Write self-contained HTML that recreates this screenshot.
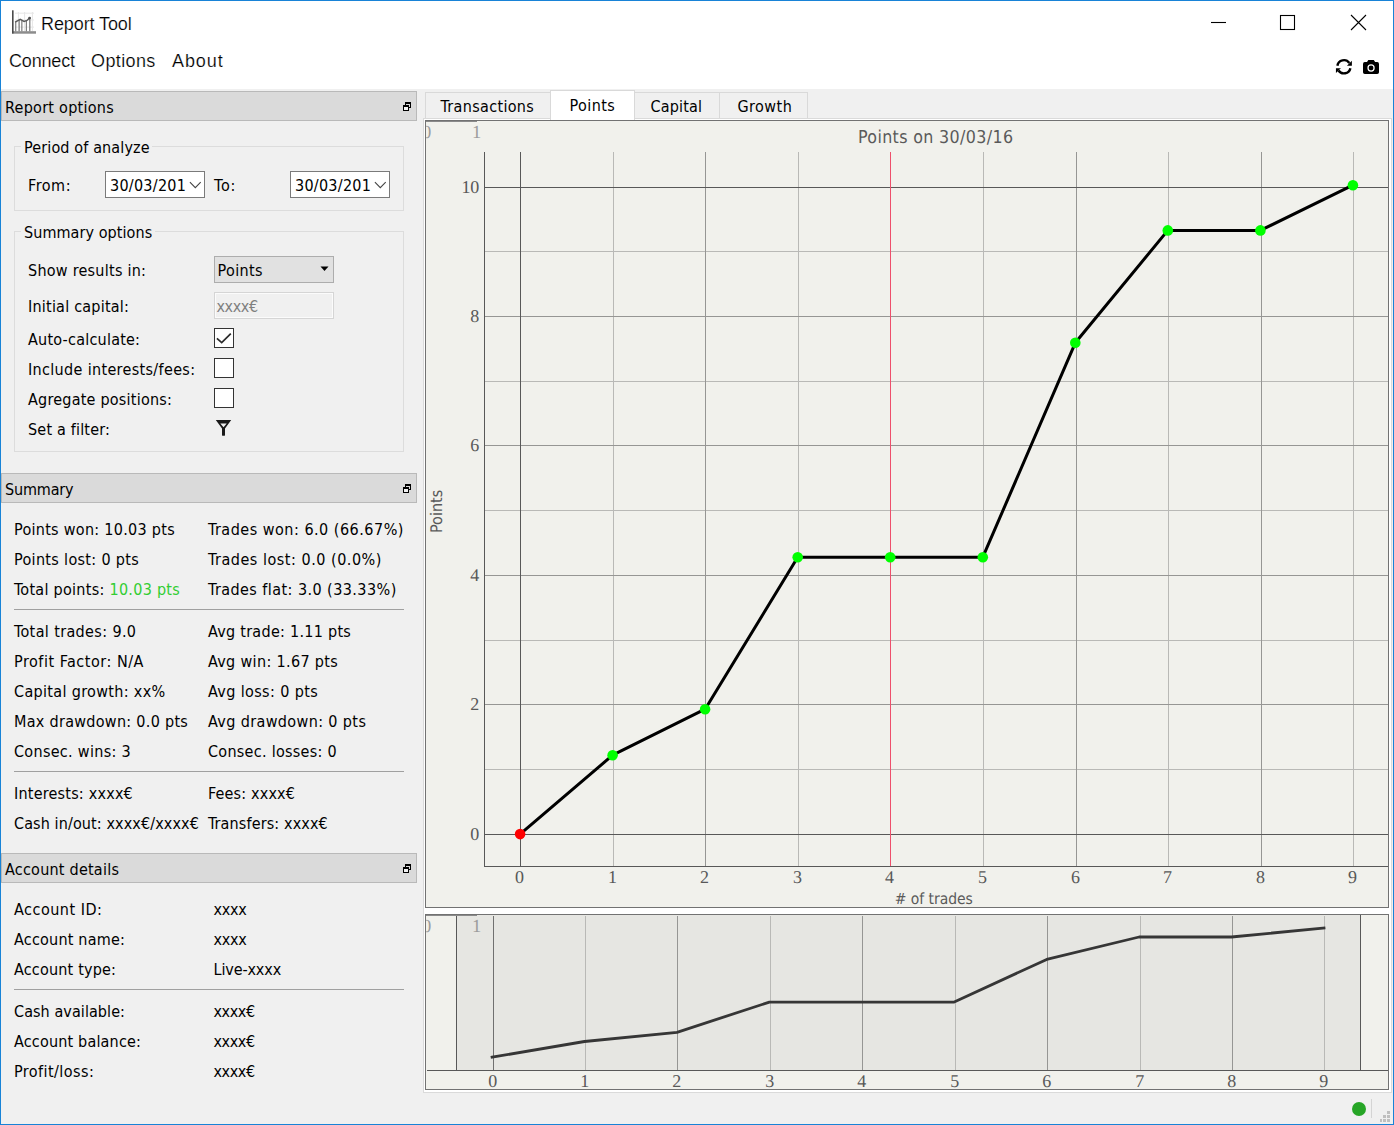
<!DOCTYPE html>
<html>
<head>
<meta charset="utf-8">
<title>Report Tool</title>
<style>
*{box-sizing:border-box;margin:0;padding:0}
html,body{width:1394px;height:1125px;overflow:hidden;background:#f0f0f0}
body{position:relative;font-family:"DejaVu Sans Condensed","Liberation Sans",sans-serif;font-size:16px;color:#000}
.abs{position:absolute}
.t{position:absolute;white-space:nowrap;line-height:20px;height:20px}
.seg{font-family:"Liberation Sans",sans-serif;font-size:18px;-webkit-text-stroke:0.2px #fff}
#win{position:absolute;left:0;top:0;width:1394px;height:1125px;border:1px solid #1883d7;z-index:50}
#top{position:absolute;left:0;top:0;width:1394px;height:89px;background:#fff}
.dock{position:absolute;left:1px;width:416px;height:30px;background:#dadada;border:1px solid #b9b9b9}
.gb{position:absolute;left:14px;width:390px;border:1px solid #dcdcdc}
.hr{position:absolute;left:14px;width:390px;height:1px;background:#a0a0a0}
.cb{position:absolute;left:214px;width:20px;height:20px;background:#fff;border:1px solid #333}
.tab{position:absolute;top:94px;height:26px;background:#f0f0f0;border:1px solid #d9d9d9;border-bottom:none}
</style>
</head>
<body>
<div id="top">
<svg class="abs" style="left:11px;top:10px" width="26" height="25" viewBox="0 0 26 25">
<g stroke="#e6e6e6" stroke-width="1" fill="none"><path d="M7.400 2V21M13.600 2V21M21.400 2V21M4 3.200H23M4 10H23M4 17.100H23"/></g>
<g fill="#707070"><rect x="4.200" y="12" width="1.100" height="9.500"/><rect x="7.600" y="9.800" width="1.100" height="11.700"/><rect x="10.300" y="10.500" width="1.100" height="11"/><rect x="14.800" y="11" width="1.100" height="10.500"/><rect x="18.200" y="8" width="1.200" height="13.500"/></g>
<path d="M4.100 12.200L9.200 9.300L13.100 11.400L16 10.500L18.600 7.900" stroke="#5a5a5a" stroke-width="1.400" fill="none"/>
<circle cx="18.600" cy="8.100" r="1.400" fill="#4c4c4c"/>
<rect x="1" y="21.200" width="24" height="2.500" fill="#8c8c8c"/>
<rect x="1" y="0.300" width="1.600" height="23.200" fill="#4a4a4a"/>
</svg>
<div class="t seg" style="left:41px;top:14px;letter-spacing:-0.099px;">Report Tool</div>
<div class="t seg" style="left:9px;top:51px;letter-spacing:-0.176px;">Connect</div>
<div class="t seg" style="left:91px;top:51px;letter-spacing:0.377px;">Options</div>
<div class="t seg" style="left:172px;top:51px;letter-spacing:0.901px;">About</div>
<svg class="abs" style="left:1200px;top:8px" width="180" height="30" viewBox="0 0 180 30">
<g stroke="#000" stroke-width="1.100" fill="none"><path d="M11 14.500h15"/><rect x="80.500" y="7.500" width="14" height="14"/><path d="M151 7l15 15M166 7l-15 15"/></g>
</svg>
<svg class="abs" style="left:1335px;top:58px" width="18" height="18" viewBox="0 0 18 18">
<g fill="none" stroke="#000" stroke-width="2.400"><path d="M2.400 7.780A6.600 6.600 0 0 1 14.340 4.960"/><path d="M15.390 10.140A6.600 6.600 0 0 1 3.520 12.540"/></g>
<path d="M16.890 2.820V7.780H11.940z" fill="#000"/><path d="M0.960 15.090V10.140H5.910z" fill="#000"/>
</svg>
<svg class="abs" style="left:1362px;top:58px" width="18" height="18" viewBox="0 0 18 18">
<path d="M1 5.900a1.800 1.800 0 0 1 1.800-1.800H5L6.300 2H11.800L13.100 4.100H15.200a1.800 1.800 0 0 1 1.800 1.800V14.200a1.800 1.800 0 0 1-1.800 1.800H2.800a1.800 1.800 0 0 1-1.800-1.800Z" fill="#000"/>
<circle cx="9.050" cy="10" r="3.050" fill="none" stroke="#fff" stroke-width="1.250"/>
</svg>
</div>
<div id="left">
<div class="dock" style="top:91px"></div>
<div class="t" style="left:5px;top:98px;letter-spacing:0.272px;">Report options</div>
<svg class="abs" style="left:403px;top:102px" width="8" height="9" viewBox="0 0 8 9"><g fill="#000"><rect x="2" y="0" width="6" height="2"/><rect x="2" y="0" width="1" height="3"/><rect x="7" y="0" width="1" height="6"/><rect x="6" y="5" width="2" height="1"/><rect x="0" y="3" width="6" height="6"/></g><rect x="1" y="5" width="4" height="3" fill="#f2f2f2"/></svg>
<div class="gb" style="top:146px;height:65px"></div>
<div class="abs" style="left:21px;top:140px;width:131px;height:12px;background:#f0f0f0"></div>
<div class="t" style="left:24px;top:138px;letter-spacing:0.131px;">Period of analyze</div>
<div class="t" style="left:28px;top:176px;letter-spacing:0.542px;">From:</div>
<div class="t" style="left:214px;top:176px;letter-spacing:0.866px;">To:</div>
<div class="abs" style="left:105px;top:171px;width:100px;height:27px;background:#fff;border:1px solid #7a7a7a"></div>
<svg class="abs" style="left:189px;top:181px" width="13" height="8" viewBox="0 0 13 8"><path d="M0.900 1.200l5.400 5.400 5.400-5.400" fill="none" stroke="#444" stroke-width="1.100"/></svg>
<div class="t" style="left:110px;top:176px;letter-spacing:0.259px;">30/03/201</div>
<div class="abs" style="left:290px;top:171px;width:100px;height:27px;background:#fff;border:1px solid #7a7a7a"></div>
<svg class="abs" style="left:374px;top:181px" width="13" height="8" viewBox="0 0 13 8"><path d="M0.900 1.200l5.400 5.400 5.400-5.400" fill="none" stroke="#444" stroke-width="1.100"/></svg>
<div class="t" style="left:295px;top:176px;letter-spacing:0.259px;">30/03/201</div>
<div class="gb" style="top:231px;height:221px"></div>
<div class="abs" style="left:21px;top:225px;width:134px;height:12px;background:#f0f0f0"></div>
<div class="t" style="left:24px;top:223px;letter-spacing:0.072px;">Summary options</div>
<div class="t" style="left:28px;top:261px;letter-spacing:0.254px;">Show results in:</div>
<div class="abs" style="left:214px;top:256px;width:120px;height:27px;background:#e1e1e1;border:1px solid #adadad"></div>
<div class="t" style="left:217.5px;top:261px;letter-spacing:0.366px;">Points</div>
<svg class="abs" style="left:320px;top:266px" width="9" height="6" viewBox="0 0 9 6"><path d="M0.500 0.500h8l-4 4.500z" fill="#000"/></svg>
<div class="t" style="left:28px;top:297px;letter-spacing:0.220px;">Initial capital:</div>
<div class="abs" style="left:214px;top:292px;width:120px;height:27px;background:#f0f0f0;border:1px solid #d5d5d5;box-shadow:inset 0 0 0 1px #fbfbfb"></div>
<div class="t" style="left:216.5px;top:297px;letter-spacing:-0.404px;color:#7f7f7f;">xxxx€</div>
<div class="t" style="left:28px;top:330px;letter-spacing:0.223px;">Auto-calculate:</div>
<div class="cb" style="top:328px"></div>
<svg class="abs" style="left:216px;top:331px" width="16" height="14" viewBox="0 0 16 14"><path d="M0.900 7.300L5.700 11.600L14.800 2.600" fill="none" stroke="#2b2b2b" stroke-width="1.700"/></svg>
<div class="t" style="left:28px;top:360px;letter-spacing:0.335px;">Include interests/fees:</div>
<div class="cb" style="top:358px"></div>
<div class="t" style="left:28px;top:390px;letter-spacing:0.226px;">Agregate positions:</div>
<div class="cb" style="top:388px"></div>
<div class="t" style="left:28px;top:420px;letter-spacing:0.188px;">Set a filter:</div>
<svg class="abs" style="left:215px;top:419px" width="17" height="18" viewBox="0 0 17 18"><path fill-rule="evenodd" d="M0.800 1H16.200L10 9.600V16.400Q8.500 17.200 7 16.400V9.600ZM5.300 4.600H11.700L8.500 8.300Z" fill="#1a1a1a"/></svg>
<div class="dock" style="top:473px"></div>
<div class="t" style="left:5px;top:480px;letter-spacing:-0.163px;">Summary</div>
<svg class="abs" style="left:403px;top:484px" width="8" height="9" viewBox="0 0 8 9"><g fill="#000"><rect x="2" y="0" width="6" height="2"/><rect x="2" y="0" width="1" height="3"/><rect x="7" y="0" width="1" height="6"/><rect x="6" y="5" width="2" height="1"/><rect x="0" y="3" width="6" height="6"/></g><rect x="1" y="5" width="4" height="3" fill="#f2f2f2"/></svg>
<div class="t" style="left:14px;top:520px;letter-spacing:0.287px;">Points won: 10.03 pts</div>
<div class="t" style="left:208px;top:520px;letter-spacing:0.501px;">Trades won: 6.0 (66.67%)</div>
<div class="t" style="left:14px;top:550px;letter-spacing:0.330px;">Points lost: 0 pts</div>
<div class="t" style="left:208px;top:550px;letter-spacing:0.526px;">Trades lost: 0.0 (0.0%)</div>
<div class="t" style="left:14px;top:580px;letter-spacing:0.280px;">Total points: <span style="color:#32cd32">10.03 pts</span></div>
<div class="t" style="left:208px;top:580px;letter-spacing:0.438px;">Trades flat: 3.0 (33.33%)</div>
<div class="t" style="left:14px;top:622px;letter-spacing:0.370px;">Total trades: 9.0</div>
<div class="t" style="left:208px;top:622px;letter-spacing:0.280px;">Avg trade: 1.11 pts</div>
<div class="t" style="left:14px;top:652px;letter-spacing:0.522px;">Profit Factor: N/A</div>
<div class="t" style="left:208px;top:652px;letter-spacing:0.343px;">Avg win: 1.67 pts</div>
<div class="t" style="left:14px;top:682px;letter-spacing:0.333px;">Capital growth: xx%</div>
<div class="t" style="left:208px;top:682px;letter-spacing:0.381px;">Avg loss: 0 pts</div>
<div class="t" style="left:14px;top:712px;letter-spacing:0.293px;">Max drawdown: 0.0 pts</div>
<div class="t" style="left:208px;top:712px;letter-spacing:0.380px;">Avg drawdown: 0 pts</div>
<div class="t" style="left:14px;top:742px;letter-spacing:0.305px;">Consec. wins: 3</div>
<div class="t" style="left:208px;top:742px;letter-spacing:0.282px;">Consec. losses: 0</div>
<div class="t" style="left:14px;top:784px;letter-spacing:0.214px;">Interests: xxxx€</div>
<div class="t" style="left:208px;top:784px;letter-spacing:0.165px;">Fees: xxxx€</div>
<div class="t" style="left:14px;top:814px;letter-spacing:0.109px;">Cash in/out: xxxx€/xxxx€</div>
<div class="t" style="left:208px;top:814px;letter-spacing:0.130px;">Transfers: xxxx€</div>
<div class="hr" style="top:609px"></div>
<div class="hr" style="top:771px"></div>
<div class="dock" style="top:853px"></div>
<div class="t" style="left:5px;top:860px;letter-spacing:0.233px;">Account details</div>
<svg class="abs" style="left:403px;top:864px" width="8" height="9" viewBox="0 0 8 9"><g fill="#000"><rect x="2" y="0" width="6" height="2"/><rect x="2" y="0" width="1" height="3"/><rect x="7" y="0" width="1" height="6"/><rect x="6" y="5" width="2" height="1"/><rect x="0" y="3" width="6" height="6"/></g><rect x="1" y="5" width="4" height="3" fill="#f2f2f2"/></svg>
<div class="t" style="left:14px;top:900px;letter-spacing:0.501px;">Account ID:</div>
<div class="t" style="left:213.5px;top:900px;letter-spacing:-0.304px;">xxxx</div>
<div class="t" style="left:14px;top:930px;letter-spacing:0.212px;">Account name:</div>
<div class="t" style="left:213.5px;top:930px;letter-spacing:-0.304px;">xxxx</div>
<div class="t" style="left:14px;top:960px;letter-spacing:0.186px;">Account type:</div>
<div class="t" style="left:213.5px;top:960px;letter-spacing:-0.124px;">Live-xxxx</div>
<div class="t" style="left:14px;top:1002px;letter-spacing:0.075px;">Cash available:</div>
<div class="t" style="left:213.5px;top:1002px;letter-spacing:-0.404px;">xxxx€</div>
<div class="t" style="left:14px;top:1032px;letter-spacing:0.181px;">Account balance:</div>
<div class="t" style="left:213.5px;top:1032px;letter-spacing:-0.404px;">xxxx€</div>
<div class="t" style="left:14px;top:1062px;letter-spacing:0.436px;">Profit/loss:</div>
<div class="t" style="left:213.5px;top:1062px;letter-spacing:-0.404px;">xxxx€</div>
<div class="hr" style="top:989px"></div>
</div>
<div id="right">
<div class="abs" style="left:423px;top:118px;width:969px;height:975px;border:1px solid #dadada;background:#fff"></div>
<div class="tab" style="left:425px;width:126px;top:92px;height:26px"></div>
<div class="t" style="left:440.5px;top:97px;letter-spacing:0.338px;z-index:3;">Transactions</div>
<div class="tab" style="left:550px;width:85px;top:90px;height:30px;background:#fff;z-index:2"></div>
<div class="t" style="left:569.6px;top:96px;letter-spacing:0.420px;z-index:3;">Points</div>
<div class="tab" style="left:634px;width:86px;top:92px;height:26px"></div>
<div class="t" style="left:650.5px;top:97px;letter-spacing:0.156px;z-index:3;">Capital</div>
<div class="tab" style="left:719px;width:89px;top:92px;height:26px"></div>
<div class="t" style="left:737.5px;top:97px;letter-spacing:0.443px;z-index:3;">Growth</div>
<svg class="abs" style="left:425px;top:120px" width="964" height="788" viewBox="425 120 964 788" font-family="Liberation Serif, DejaVu Serif, serif" font-size="18" text-rendering="geometricPrecision">
<rect x="425" y="120" width="964" height="788" fill="#f1f1ec"/>
<g stroke="#b9b9b6" stroke-width="1" shape-rendering="crispEdges">
<path d="M613.5 152V866"/><path d="M798.5 152V866"/><path d="M983.5 152V866"/><path d="M1168.5 152V866"/><path d="M1353.5 152V866"/><path d="M484 769.5H1388"/><path d="M484 640.5H1388"/><path d="M484 510.5H1388"/><path d="M484 381.5H1388"/><path d="M484 251.5H1388"/></g>
<g stroke="#969694" stroke-width="1" shape-rendering="crispEdges"><path d="M705.5 152V866"/><path d="M1076.5 152V866"/><path d="M1261.5 152V866"/><path d="M484 704.5H1388"/><path d="M484 575.5H1388"/><path d="M484 445.5H1388"/><path d="M484 316.5H1388"/></g>
<g stroke="#585858" stroke-width="1" shape-rendering="crispEdges"><path d="M484 834.5H1388"/><path d="M484 187.5H1388"/><path d="M520.5 152V866"/></g>
<path d="M890.5 152V866" stroke="#ee4f6b" stroke-width="1" shape-rendering="crispEdges"/>
<g stroke="#585858" stroke-width="1" fill="none" shape-rendering="crispEdges"><path d="M484.500 152V866.500H1388"/><path d="M426 121.500H477" stroke="#8a8a8a"/></g>
<polyline points="520.1,834.1 612.6,755.2 705.1,709.2 797.7,557.2 890.2,557.2 982.8,557.2 1075.3,342.8 1167.8,230.4 1260.4,230.4 1352.9,185.2" fill="none" stroke="#000" stroke-width="3" stroke-linejoin="round"/>
<circle cx="520.1" cy="834.1" r="5.300" fill="#ff0000"/><circle cx="612.6" cy="755.2" r="5.300" fill="#00ff00"/><circle cx="705.1" cy="709.2" r="5.300" fill="#00ff00"/><circle cx="797.7" cy="557.2" r="5.300" fill="#00ff00"/><circle cx="890.2" cy="557.2" r="5.300" fill="#00ff00"/><circle cx="982.8" cy="557.2" r="5.300" fill="#00ff00"/><circle cx="1075.3" cy="342.8" r="5.300" fill="#00ff00"/><circle cx="1167.8" cy="230.4" r="5.300" fill="#00ff00"/><circle cx="1260.4" cy="230.4" r="5.300" fill="#00ff00"/><circle cx="1352.9" cy="185.2" r="5.300" fill="#00ff00"/>
<g fill="#585858">
<text x="519.6" y="883" text-anchor="middle">0</text><text x="612.6" y="883" text-anchor="middle">1</text><text x="704.6" y="883" text-anchor="middle">2</text><text x="797.6" y="883" text-anchor="middle">3</text><text x="889.6" y="883" text-anchor="middle">4</text><text x="982.6" y="883" text-anchor="middle">5</text><text x="1075.6" y="883" text-anchor="middle">6</text><text x="1167.6" y="883" text-anchor="middle">7</text><text x="1260.6" y="883" text-anchor="middle">8</text><text x="1352.6" y="883" text-anchor="middle">9</text><text x="479.300" y="839.8" text-anchor="end">0</text><text x="479.300" y="709.8" text-anchor="end">2</text><text x="479.300" y="580.8" text-anchor="end">4</text><text x="479.300" y="450.8" text-anchor="end">6</text><text x="479.300" y="321.8" text-anchor="end">8</text><text x="461.600" y="193.0" textLength="17.700" lengthAdjust="spacing">10</text></g>
<g fill="#9c9c9c" font-size="18.500"><text x="422" y="138">0</text><text x="472" y="138">1</text></g>
<g font-family="DejaVu Sans Condensed, Liberation Sans, sans-serif" fill="#5a5a5a"><text x="858" y="143.200" font-size="17.700" textLength="155" lengthAdjust="spacing">Points on 30/03/16</text><text x="894.800" y="904.400" font-size="15.500" textLength="78" lengthAdjust="spacing"># of trades</text><text transform="translate(442.200,533) rotate(-90)" font-size="16" textLength="43.200" lengthAdjust="spacing">Points</text></g>
<rect x="425.5" y="120.5" width="963" height="787" fill="none" stroke="#727272" stroke-width="1" shape-rendering="crispEdges"/>
</svg>
<svg class="abs" style="left:425px;top:914px" width="964" height="176" viewBox="425 914 964 176" font-family="Liberation Serif, DejaVu Serif, serif" font-size="18" text-rendering="geometricPrecision">
<rect x="425" y="914" width="964" height="176" fill="#f1f1ec"/>
<rect x="457" y="915" width="903" height="155" fill="#e6e6e2"/>
<g stroke="#b9b9b6" stroke-width="1" shape-rendering="crispEdges"><path d="M585.5 916V1070"/><path d="M770.5 916V1070"/><path d="M955.5 916V1070"/><path d="M1140.5 916V1070"/><path d="M1324.5 916V1070"/></g>
<g stroke="#969694" stroke-width="1" shape-rendering="crispEdges"><path d="M677.5 916V1070"/><path d="M862.5 916V1070"/><path d="M1047.5 916V1070"/><path d="M1232.5 916V1070"/><path d="M493.5 916V1070" stroke="#707070"/></g>
<g stroke="#585858" stroke-width="1" shape-rendering="crispEdges"><path d="M456.500 915V1070"/><path d="M1360.500 915V1070"/><path d="M427 1070.500H1388"/><path d="M426 915.500H477" stroke="#8a8a8a"/></g>
<polyline points="492.1,1057.2 584.5,1041.5 677.0,1032.3 769.4,1002.1 861.8,1002.1 954.2,1002.1 1046.7,959.4 1139.1,937.0 1231.5,937.0 1324.0,928.0" fill="none" stroke="#363636" stroke-width="2.800" stroke-linejoin="round" stroke-linecap="square"/>
<g fill="#585858"><text x="492.7" y="1086.600" text-anchor="middle">0</text><text x="584.7" y="1086.600" text-anchor="middle">1</text><text x="676.7" y="1086.600" text-anchor="middle">2</text><text x="769.7" y="1086.600" text-anchor="middle">3</text><text x="861.7" y="1086.600" text-anchor="middle">4</text><text x="954.7" y="1086.600" text-anchor="middle">5</text><text x="1046.7" y="1086.600" text-anchor="middle">6</text><text x="1139.7" y="1086.600" text-anchor="middle">7</text><text x="1231.7" y="1086.600" text-anchor="middle">8</text><text x="1323.7" y="1086.600" text-anchor="middle">9</text></g>
<g fill="#9c9c9c" font-size="18.500"><text x="422" y="932">0</text><text x="472" y="932">1</text></g>
<rect x="425.5" y="914.5" width="963" height="175" fill="none" stroke="#727272" stroke-width="1" shape-rendering="crispEdges"/>
</svg>
<div class="abs" style="left:1352px;top:1102px;width:14px;height:14px;border-radius:7px;background:#26a526"></div>
<div class="abs" style="left:1371px;top:1099px;width:1px;height:19px;background:#d4d4d4"></div>
<svg class="abs" style="left:1380px;top:1111px" width="10" height="11" viewBox="0 0 10 11"><g fill="#bfbfbf"><rect x="7" y="0" width="3" height="3"/><rect x="3" y="4" width="3" height="3"/><rect x="7" y="4" width="3" height="3"/><rect x="0" y="8" width="2" height="3"/><rect x="3" y="8" width="3" height="3"/><rect x="7" y="8" width="3" height="3"/></g></svg>
</div>
<div id="win"></div>
</body>
</html>
